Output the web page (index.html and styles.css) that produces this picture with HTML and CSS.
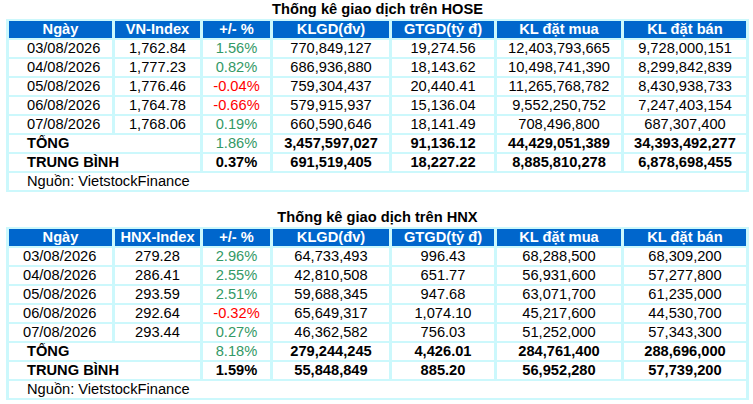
FILE: index.html
```html
<!DOCTYPE html>
<html lang="vi">
<head>
<meta charset="utf-8">
<title>Thống kê giao dịch</title>
<link rel="stylesheet" href="styles.css">
</head>
<body>
<div class="page">
  <section class="block">
    <div class="title">Thống kê giao dịch trên HOSE</div>
    <table class="stats stats-hose">
      <colgroup>
        <col class="c1"><col class="c2"><col class="c3"><col class="c4"><col class="c5"><col class="c6"><col class="c7">
      </colgroup>
      <thead>
        <tr><th>Ngày</th><th>VN-Index</th><th>+/- %</th><th>KLGD(đv)</th><th>GTGD(tỷ đ)</th><th>KL đặt mua</th><th>KL đặt bán</th></tr>
      </thead>
      <tbody>
        <tr><td class="date">03/08/2026</td><td>1,762.84</td><td class="up">1.56%</td><td>770,849,127</td><td>19,274.56</td><td>12,403,793,665</td><td>9,728,000,151</td></tr>
        <tr><td class="date">04/08/2026</td><td>1,777.23</td><td class="up">0.82%</td><td>686,936,880</td><td>18,143.62</td><td>10,498,741,390</td><td>8,299,842,839</td></tr>
        <tr><td class="date">05/08/2026</td><td>1,776.46</td><td class="down">-0.04%</td><td>759,304,437</td><td>20,440.41</td><td>11,265,768,782</td><td>8,430,938,733</td></tr>
        <tr><td class="date">06/08/2026</td><td>1,764.78</td><td class="down">-0.66%</td><td>579,915,937</td><td>15,136.04</td><td>9,552,250,752</td><td>7,247,403,154</td></tr>
        <tr><td class="date">07/08/2026</td><td>1,768.06</td><td class="up">0.19%</td><td>660,590,646</td><td>18,141.49</td><td>708,496,800</td><td>687,307,400</td></tr>
        <tr class="total"><td colspan="2" class="label">TỔNG</td><td class="up plain">1.86%</td><td>3,457,597,027</td><td>91,136.12</td><td>44,429,051,389</td><td>34,393,492,277</td></tr>
        <tr class="total"><td colspan="2" class="label">TRUNG BÌNH</td><td>0.37%</td><td>691,519,405</td><td>18,227.22</td><td>8,885,810,278</td><td>6,878,698,455</td></tr>
        <tr><td colspan="7" class="source">Nguồn: VietstockFinance</td></tr>
      </tbody>
    </table>
  </section>

  <section class="block block-second">
    <div class="title">Thống kê giao dịch trên HNX</div>
    <table class="stats stats-hnx">
      <colgroup>
        <col class="c1"><col class="c2"><col class="c3"><col class="c4"><col class="c5"><col class="c6"><col class="c7">
      </colgroup>
      <thead>
        <tr><th>Ngày</th><th>HNX-Index</th><th>+/- %</th><th>KLGD(đv)</th><th>GTGD(tỷ đ)</th><th>KL đặt mua</th><th>KL đặt bán</th></tr>
      </thead>
      <tbody>
        <tr><td class="date">03/08/2026</td><td>279.28</td><td class="up">2.96%</td><td>64,733,493</td><td>996.43</td><td>68,288,500</td><td>68,309,200</td></tr>
        <tr><td class="date">04/08/2026</td><td>286.41</td><td class="up">2.55%</td><td>42,810,508</td><td>651.77</td><td>56,931,600</td><td>57,277,800</td></tr>
        <tr><td class="date">05/08/2026</td><td>293.59</td><td class="up">2.51%</td><td>59,688,345</td><td>947.68</td><td>63,071,700</td><td>61,235,000</td></tr>
        <tr><td class="date">06/08/2026</td><td>292.64</td><td class="down">-0.32%</td><td>65,649,317</td><td>1,074.10</td><td>45,217,600</td><td>44,530,700</td></tr>
        <tr><td class="date">07/08/2026</td><td>293.44</td><td class="up">0.27%</td><td>46,362,582</td><td>756.03</td><td>51,252,000</td><td>57,343,300</td></tr>
        <tr class="total"><td colspan="2" class="label">TỔNG</td><td class="up plain">8.18%</td><td>279,244,245</td><td>4,426.01</td><td>284,761,400</td><td>288,696,000</td></tr>
        <tr class="total"><td colspan="2" class="label">TRUNG BÌNH</td><td>1.59%</td><td>55,848,849</td><td>885.20</td><td>56,952,280</td><td>57,739,200</td></tr>
        <tr><td colspan="7" class="source">Nguồn: VietstockFinance</td></tr>
      </tbody>
    </table>
  </section>
</div>
</body>
</html>
```

FILE: styles.css
```css
html, body {
  margin: 0;
  padding: 0;
  background: #ffffff;
}

body {
  font-family: "Liberation Sans", Arial, sans-serif;
  font-size: 14.67px;
  color: #000000;
}

.page {
  width: 743px;
  padding-left: 6px;
}

.block-second {
  margin-top: 16px;
}

.title {
  height: 19px;
  line-height: 19px;
  text-align: center;
  font-weight: bold;
}

.stats {
  width: 743px;
  table-layout: fixed;
  border-collapse: separate;
  border-spacing: 3px 2px;
  background: #ccf8fc;
}

.c1 { width: 103px; }
.c2 { width: 85px; }
.c3 { width: 67px; }
.c4 { width: 116px; }
.c5 { width: 102px; }
.c6 { width: 124px; }
.c7 { width: 122px; }

.stats th,
.stats td {
  height: 17px;
  padding: 0;
  line-height: 17px;
  text-align: center;
  white-space: nowrap;
  overflow: hidden;
}

.stats th {
  background: #0066cc;
  color: #ffffff;
  font-weight: bold;
}

.stats td {
  background: #ffffff;
}

.stats-hose .date {
  text-align: left;
  padding-left: 18px;
}

.stats-hnx .date {
  text-align: left;
  padding-left: 14px;
}

.up { color: #339966; }
.down { color: #ff0000; }

.total td {
  font-weight: bold;
}

.total td.plain {
  font-weight: normal;
}

.stats td.label,
.stats td.source {
  text-align: left;
  padding-left: 18px;
}

.stats td.source {
  font-weight: normal;
}
```
